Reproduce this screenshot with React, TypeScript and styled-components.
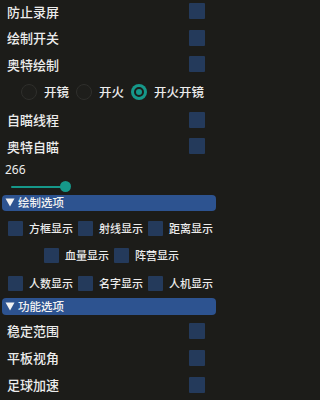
import React, { useState } from 'react'
import styled, { createGlobalStyle } from 'styled-components'

const GlobalStyle = createGlobalStyle`
  html, body {
    margin: 0;
    padding: 0;
    background: #1c1c19;
  }
  body {
    font-family: "Noto Sans CJK SC", "Noto Sans", sans-serif;
    font-weight: 500;
    color: #ececec;
    overflow: hidden;
  }
`

const Panel = styled.div`
  width: 217px;
  height: 400px;
  display: flex;
  flex-direction: column;
  background: #1c1c19;
`

const CheckRow = styled.div`
  display: flex;
  align-items: center;
  justify-content: space-between;
  height: 23px;
  padding: 0 12px 0 7px;
  margin-bottom: 4px;
  font-size: 13px;
  line-height: 1;
`

const Box = styled.span<{ size?: number }>`
  display: inline-block;
  flex-shrink: 0;
  width: ${props => props.size || 16}px;
  height: ${props => props.size || 16}px;
  background: #243a5b;
  border-radius: 1px;
`

const RadioRow = styled.div`
  display: flex;
  align-items: center;
  height: 25px;
  padding-left: 21px;
  margin-bottom: 4px;
  font-size: 12.5px;
  line-height: 1;
`

const RadioItem = styled.label`
  display: flex;
  align-items: center;
  gap: 7px;
  margin-right: 7px;
  cursor: pointer;
`

const RadioCircle = styled.span<{ checked: boolean }>`
  position: relative;
  width: 16px;
  height: 16px;
  box-sizing: border-box;
  border-radius: 50%;
  background: ${props => (props.checked ? '#16988a' : '#1e1e1b')};
  border: ${props => (props.checked ? 'none' : '1.5px solid #2f2f2c')};

  &::after {
    content: '';
    display: ${props => (props.checked ? 'block' : 'none')};
    position: absolute;
    left: 3px;
    top: 3px;
    width: 6px;
    height: 6px;
    border-radius: 50%;
    background: #16988a;
    border: 2px solid #1c1c19;
  }
`

const ValueLabel = styled.div`
  height: 16px;
  padding-left: 5px;
  font-family: "Noto Sans", sans-serif;
  font-weight: 400;
  font-size: 12px;
  line-height: 16px;
  margin-bottom: 4px;
`

const SliderRow = styled.div`
  display: flex;
  align-items: center;
  height: 10px;
  padding-left: 11px;
  margin-bottom: 3px;
`

const Track = styled.div`
  height: 2px;
  background: #16988a;
  border-radius: 1px;
`

const Knob = styled.span`
  width: 11px;
  height: 11px;
  margin-left: -3px;
  border-radius: 50%;
  background: #16988a;
`

const Header = styled.div`
  display: flex;
  align-items: center;
  gap: 3px;
  height: 17px;
  margin: 0 1px 0 2px;
  padding-left: 3px;
  background: #2d5390;
  border-radius: 4px;
  font-size: 11.5px;
  line-height: 1;
  color: #f2f2f2;
`

const GridRow = styled.div<{ start: number }>`
  display: flex;
  align-items: center;
  height: 22px;
  padding-left: ${props => props.start}px;
  margin-top: 6px;
  font-size: 11px;
  line-height: 1;
`

const GridItem = styled.div`
  display: flex;
  align-items: center;
  gap: 6px;
  width: 70px;
  flex-shrink: 0;
  white-space: nowrap;
`

const Section = styled.div`
  margin-top: 4px;
`

const Triangle = () => (
  <svg width="10" height="9" viewBox="0 0 10 9">
    <polygon points="0.5,0.5 9.5,0.5 5,8.5" fill="#f2f2f2" />
  </svg>
)

const topOptions = ['防止录屏', '绘制开关', '奥特绘制']
const aimOptions = ['自瞄线程', '奥特自瞄']
const radios = ['开镜', '开火', '开火开镜']
const drawRows = [
  { start: 8, items: ['方框显示', '射线显示', '距离显示'] },
  { start: 44, items: ['血量显示', '阵营显示'] },
  { start: 8, items: ['人数显示', '名字显示', '人机显示'] },
]
const funcOptions = ['稳定范围', '平板视角', '足球加速']

export default function App() {
  const [mode, setMode] = useState(2)
  const value = 266
  const trackWidth = 52

  return (
    <Panel>
      <GlobalStyle />
      {topOptions.map(label => (
        <CheckRow key={label}>
          <span>{label}</span>
          <Box />
        </CheckRow>
      ))}
      <RadioRow>
        {radios.map((label, i) => (
          <RadioItem key={label} onClick={() => setMode(i)}>
            <RadioCircle checked={mode === i} />
            <span>{label}</span>
          </RadioItem>
        ))}
      </RadioRow>
      {aimOptions.map(label => (
        <CheckRow key={label}>
          <span>{label}</span>
          <Box />
        </CheckRow>
      ))}
      <ValueLabel>{value}</ValueLabel>
      <SliderRow>
        <Track style={{ width: trackWidth }} />
        <Knob />
      </SliderRow>
      <Header>
        <Triangle />
        <span>绘制选项</span>
      </Header>
      {drawRows.map((row, i) => (
        <GridRow key={i} start={row.start}>
          {row.items.map(label => (
            <GridItem key={label}>
              <Box size={15} />
              <span>{label}</span>
            </GridItem>
          ))}
        </GridRow>
      ))}
      <Section>
        <Header>
          <Triangle />
          <span>功能选项</span>
        </Header>
      </Section>
      <Section>
        {funcOptions.map(label => (
          <CheckRow key={label}>
            <span>{label}</span>
            <Box />
          </CheckRow>
        ))}
      </Section>
    </Panel>
  )
}
